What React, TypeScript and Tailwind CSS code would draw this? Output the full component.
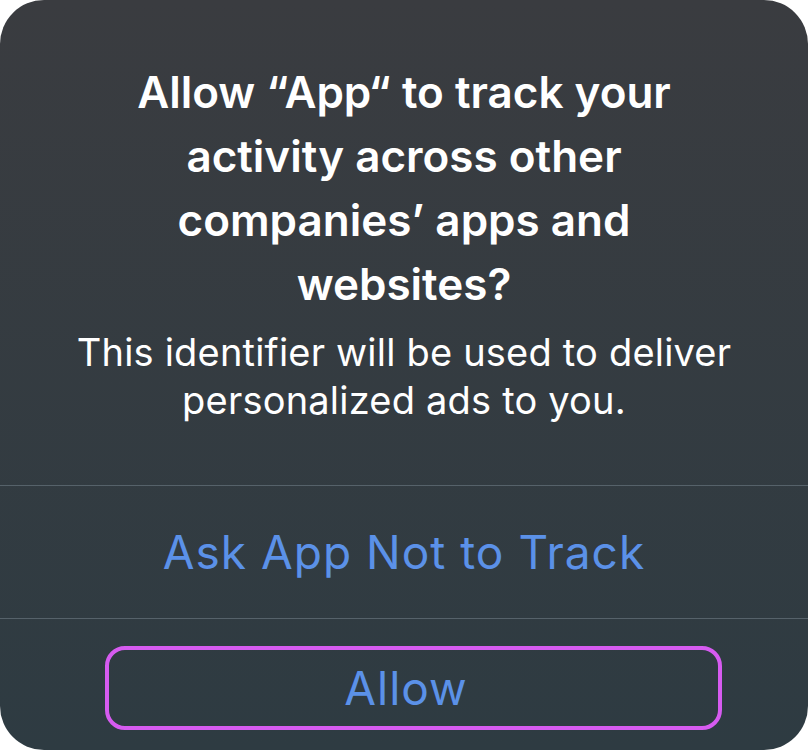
export default function App() {
  return (
    <div className="w-[810px] h-[752px] bg-white" style={{ fontFamily: "Inter, 'Noto Sans', sans-serif" }}>
      <div className="w-[808px] h-[750px] rounded-[44px] overflow-hidden flex flex-col bg-gradient-to-b from-[#3a3c40] to-[#2e3b42]">
        <div className="pt-[60px] text-center">
          <h1 className="px-[100px] text-[44px] leading-[64px] font-semibold text-white">
            Allow “App“ to track your activity across other companies’ apps and websites?
          </h1>
          <p className="mt-[12px] px-[50px] text-[38px] leading-[48px] tracking-[0.2px] text-white">
            This identifier will be used to deliver personalized ads to you.
          </p>
        </div>
        <div className="mt-auto border-t border-[#56626a]">
          <div className="h-[132px] flex items-center justify-center text-[46px] tracking-[1px] text-[#5b91e8]">
            Ask App Not to Track
          </div>
          <div className="border-t border-[#56626a] pt-[27px] pl-[105px] pr-[86px] pb-[20px]">
            <div className="h-[84px] pr-[15px] rounded-[20px] border-4 border-[#d65bf0] flex items-center justify-center text-[46px] tracking-[1px] text-[#5b91e8]">
              Allow
            </div>
          </div>
        </div>
      </div>
    </div>
  );
}
